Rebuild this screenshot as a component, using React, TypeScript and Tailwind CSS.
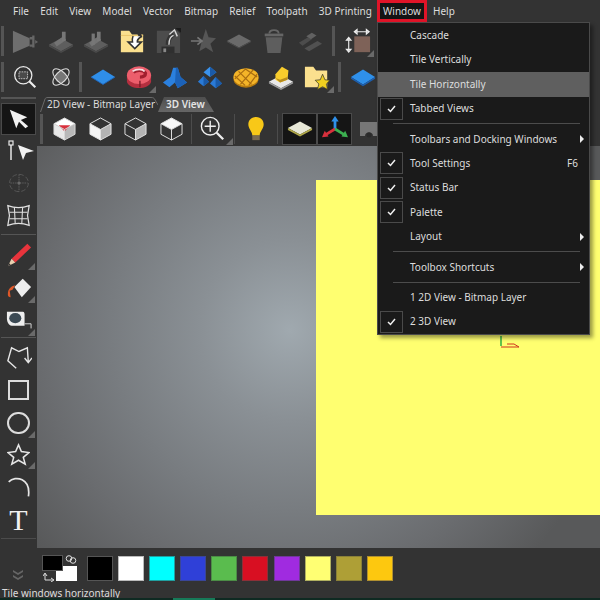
import React from 'react'

const Corner = () => (
  <svg className="absolute right-[1px] bottom-[1px]" width="7" height="7" viewBox="0 0 7 7"><path d="M7 0V7H0Z" fill="#6a6a6a" /></svg>
)

function Btn({ children, more, w = 'w-[35.6px]', h = 'h-[34px]' }: { children: React.ReactNode; more?: boolean; w?: string; h?: string }) {
  return (
    <div className={`relative flex shrink-0 items-center justify-center ${h} ${w}`}>
      {children}
      {more && <Corner />}
    </div>
  )
}

const VSep = ({ cls = 'h-[30px]' }: { cls?: string }) => <div className={`w-[3px] shrink-0 bg-[#555555] ${cls}`} />

function Ico({ children, s = 26 }: { children: React.ReactNode; s?: number }) {
  return <svg width={s} height={s} viewBox="0 0 28 28" fill="none">{children}</svg>
}

const Extrude = () => (
  <Ico><path d="M1 3L19 11V19L1 27Z" fill="#6e6e6e" /><path d="M19 11H23M19 19H23M23 8V21" stroke="#666" strokeWidth="2.500" /><path d="M25 13l3 2-3 2Z" fill="#666" /></Ico>
)
const Plate = ({ two }: { two?: boolean }) => (
  <Ico>
    <path d="M1 18L14 11L27 18L14 25Z" fill="#5e5e5e" /><path d="M1 18V20L14 27L27 20V18L14 25Z" fill="#4a4a4a" />
    <path d="M8 18L18 11" stroke="#747474" strokeWidth="5" /><path d="M17 4V14" stroke="#777" strokeWidth="4" />
    {two && <path d="M11 6V18" stroke="#777" strokeWidth="3.500" />}
  </Ico>
)
const FolderArrow = () => (
  <Ico>
    <path d="M2 3H11L14 7H26V26H2Z" fill="#fbe08e" /><path d="M2 8H26" stroke="#e8c468" strokeWidth="1" />
    <path d="M16 9C15 11 15 13 15.500 16H12L17 21L22 16H19C18.500 13 19.500 11 23 9L21 5" stroke="#333" strokeWidth="3.500" />
    <path d="M16 9C15 11 15 13 15.500 16H12L17 21L22 16H19C18.500 13 19.500 11 23 9" fill="#fff" />
  </Ico>
)
const SaveUp = () => (
  <Ico>
    <path d="M2 3H24L27 6V27H2Z" fill="#4c4c4c" /><path d="M7 20H21V27H7Z" fill="#2f2f2f" /><path d="M9 22H12V26H9Z" fill="#888" />
    <path d="M14 18C14 12 16 9 20 7" stroke="#333" strokeWidth="5" /><path d="M15 18C15 12 17 9 20 8M15.500 7L21 2L24 9" stroke="#d8d8d8" strokeWidth="1.500" />
    <path d="M22 0H28V5Z" fill="#1c1c1c" />
  </Ico>
)
const StarIn = () => (
  <Ico><path d="M17 1L20 10L28 11L22 17L25 26L17 21L10 25L12 17" fill="#565656" /><path d="M1 14H12M8 10L13 14L8 18" stroke="#777" strokeWidth="1.800" /></Ico>
)
const Diamond = () => (
  <Ico><path d="M1 14L14 7L27 14L14 21Z" fill="#6a6a6a" /><path d="M1 14V15L14 22L27 15V14L14 21Z" fill="#4e4e4e" /></Ico>
)
const Bucket = () => (
  <Ico><path d="M9 6C9 1 19 1 19 6" stroke="#666" strokeWidth="2" /><path d="M4 6H24V9H4Z" fill="#666" /><path d="M5 10H23L21 27H7Z" fill="#5e5e5e" /></Ico>
)
const Steps = () => (
  <Ico><path d="M2 16L12 10L16 12L6 19Z" fill="#4c4c4c" /><path d="M10 9L16 5L21 8L15 12Z" fill="#616161" /><path d="M8 22L22 14L27 17L13 25Z" fill="#515151" /></Ico>
)
const Resize = () => (
  <Ico>
    <path d="M10 9H27V26H10Z" fill="#7e6258" /><path d="M10 4H26M10 4l3-2.500v5ZM26 4l-3-2.500v5Z" stroke="#eee" strokeWidth="1.200" />
    <path d="M4 10V26M4 10l-2.500 3h5ZM4 26l-2.500-3h5Z" stroke="#eee" strokeWidth="1.200" />
  </Ico>
)
const ZoomBox = () => (
  <Ico s={24}><circle cx="12" cy="12" r="10" stroke="#e8e8e8" strokeWidth="1.500" /><path d="M7 8H17V16H7Z" stroke="#cfcfcf" strokeDasharray="2 1" fill="#4a4a4a" /><path d="M19 19L26 26" stroke="#eee" strokeWidth="2.500" /></Ico>
)
const Atom = () => (
  <Ico s={24}><circle cx="14" cy="14" r="7" fill="#767676" /><ellipse cx="14" cy="14" rx="6" ry="12" stroke="#ddd" strokeWidth="1.200" transform="rotate(45 14 14)" /><ellipse cx="14" cy="14" rx="6" ry="12" stroke="#ddd" strokeWidth="1.200" transform="rotate(-45 14 14)" /></Ico>
)
const BlueDiamond = () => (
  <Ico><path d="M1 14L14 6L27 14L14 22Z" fill="#2f8ee8" /><path d="M1 14L14 22L27 14" stroke="#1f64b8" strokeWidth="1" /></Ico>
)
const RedRing = () => (
  <Ico>
    <path d="M1 13V19C3 28 25 28 27 19V13Z" fill="#b42f3f" /><ellipse cx="14" cy="12" rx="13" ry="9.500" fill="#ec5e6c" />
    <path d="M8 9C11 6 19 6 21 10C21 13 18 14 15 14" stroke="#a01f2e" strokeWidth="3.500" /><path d="M7 8C11 5 18 5 20 8" stroke="#f6dce0" strokeWidth="1.800" />
    <path d="M15 18V25" stroke="#7c1c28" strokeWidth="1.500" />
  </Ico>
)
const Peak = () => (
  <Ico><path d="M1 20L9 14L12 4H17L20 14L27 20L17 26L14 20L8 25Z" fill="#2b80de" /><path d="M15 4H17L20 14L27 20L17 26L14 20Z" fill="#1c62b8" /></Ico>
)
const Peaks = () => (
  <Ico>
    <path d="M7 9L14 3L21 9L14 14Z" fill="#3a92ec" /><path d="M1 19L7 13L13 19L7 24Z" fill="#2a7ad6" /><path d="M14 21L20 14L27 21L20 26Z" fill="#2a7ad6" />
    <path d="M14 3V14L21 9ZM7 13V24L13 19ZM20 14V26L27 21Z" fill="#1a5aa8" />
  </Ico>
)
const Waffle = () => (
  <Ico>
    <ellipse cx="14" cy="16" rx="13.500" ry="9.500" fill="#b87c10" /><ellipse cx="14" cy="14" rx="13.500" ry="9.500" fill="#f4b428" />
    <path d="M6 8L20 22M13 5L26 14M2 13L13 23M22 6L8 22M14 5L2 16M26 11L17 23" stroke="#a86c10" strokeWidth="1.300" />
  </Ico>
)
const Gem = () => (
  <Ico><path d="M1 19L14 12L27 19L14 26Z" fill="#e8e8e8" /><path d="M1 19V21L14 28L27 21V19L14 26Z" fill="#9a9a9a" /><path d="M8 11L15 3L22 7L21 17L13 20L8 17Z" fill="#f8cc2c" /><path d="M8 15L13 20L21 17V14L13 17Z" fill="#b88c1c" /></Ico>
)
const FolderStar = () => (
  <Ico><path d="M1 3H10L13 7H25V25H1Z" fill="#fbe08e" /><path d="M20 11L22.500 17L28 17.500L24 21.500L25.500 27.500L20 24.500L14.500 27.500L16 21.500L12 17.500L17.500 17Z" fill="#f0d020" stroke="#3a3a2a" strokeWidth="0.800" /></Ico>
)
const BlueSlab = () => (
  <Ico><path d="M1 14L14 6L27 14L14 22Z" fill="#2f90ea" /><path d="M1 14V16L14 24L27 16V14L14 22Z" fill="#1c5fb0" /></Ico>
)

// hex cube, faces given top / left / right
function Cube({ top, left, right, red }: { top: string; left: string; right: string; red?: boolean }) {
  return (
    <svg width="23" height="24" viewBox="0 0 24 25" fill="none">
      <path d="M12 1L23 7L12 13L1 7Z" fill={top} />
      <path d="M1 7L12 13V24L1 18Z" fill={left} />
      <path d="M23 7L12 13V24L23 18Z" fill={right} />
      {red && <path d="M6 8.500H18L12 15Z" fill="#d8303c" />}
      <path d="M12 1L23 7V18L12 24L1 18V7ZM1 7L12 13L23 7M12 13V24" stroke={red ? '#d8d8d8' : '#e4e4e4'} strokeWidth="1" />
    </svg>
  )
}
const ZoomPlus = () => (
  <Ico><circle cx="11" cy="11" r="9.500" stroke="#eee" strokeWidth="1.500" /><path d="M11 5V17M5 11H17" stroke="#eee" strokeWidth="1.500" /><path d="M18 18L25 25" stroke="#eee" strokeWidth="2.500" /></Ico>
)
const Bulb = () => (
  <Ico><path d="M14 1C7 1 5 7 6 11C7 15 10 17 10 21H18C18 17 21 15 22 11C23 7 21 1 14 1Z" fill="#f8c818" /><path d="M10 21H18V26H10Z" fill="#7a6a50" /></Ico>
)
const PlateYellow = () => (
  <Ico><path d="M1 13L14 6L27 13L14 20Z" fill="#e8e8d8" /><path d="M1 13V15L14 22L27 15V13L14 20Z" fill="#b0a848" /></Ico>
)
const Axes = () => (
  <Ico><path d="M14 14V4" stroke="#2f90ea" strokeWidth="3" /><path d="M14 0L18 6H10Z" fill="#2f90ea" /><path d="M14 14L4 20" stroke="#d8303c" strokeWidth="3" /><path d="M0 23L3 16L7 22Z" fill="#d8303c" /><path d="M14 14L24 20" stroke="#3cb050" strokeWidth="3" /><path d="M28 23L25 16L21 22Z" fill="#3cb050" /></Ico>
)
const Arrow = () => (
  <svg width="22" height="22" viewBox="0 0 24 24"><path d="M2 2L21 10L14 13L22 20L19 22L12 15L9 22Z" fill="#f2f2f2" /></svg>
)
const NodeArrow = () => (
  <svg width="30" height="24" viewBox="0 0 30 24" fill="none">
    <path d="M7 6V21" stroke="#e8e8e8" strokeWidth="1.500" /><rect x="5" y="2" width="4" height="4" stroke="#e8e8e8" strokeWidth="1.200" />
    <path d="M14 6L30 12L22 14L19 21Z" fill="#f2f2f2" />
  </svg>
)
const Move3d = () => (
  <Ico s={22}>
    <ellipse cx="14" cy="14" rx="12" ry="11" stroke="#5e5e5e" strokeWidth="1" strokeDasharray="6 3" /><path d="M14 3V25M3 14H25" stroke="#666" strokeWidth="1" strokeDasharray="2 1" /><circle cx="14" cy="14" r="2" fill="#6a6a6a" />
  </Ico>
)
const Warp = () => (
  <Ico s={23}>
    <path d="M1 2C9 5 19 5 27 2L25 14L27 26C19 23 9 23 1 26L3 14Z" fill="#383838" stroke="#e0e0e0" strokeWidth="1.500" />
    <path d="M9 4L10 24M19 4L18 24M3 10H25M3 18H25" stroke="#e0e0e0" strokeWidth="1.300" />
  </Ico>
)
const Pencil = () => (
  <Ico><path d="M6 18L23 2L27 6L10 22Z" fill="#e8343c" /><path d="M6 18L10 22L2 26Z" fill="#e8d0b0" /><path d="M2 26L3.500 23L5 24.500Z" fill="#333" /></Ico>
)
const Eraser = () => (
  <Ico><path d="M9 13L18 4L27 13L17 24Z" fill="#eeeeee" /><path d="M2 21C2 15 5 12 10 11L7 16L4 17L5 24C3 24 2 23 2 21Z" fill="#e05828" /></Ico>
)
const Tape = () => (
  <Ico><path d="M1 4H18C20 4 20 6 20 8V19H6C3 19 1 15 1 11Z" fill="#eeeeee" /><ellipse cx="10" cy="11" rx="6.500" ry="5.500" fill="#3c4a54" /><path d="M20 17H27V22" stroke="#ddd" strokeWidth="1" /></Ico>
)
const Poly = () => (
  <Ico><path d="M11 25L2 17L6 3L14 7L23 3L24 18M20 14L24 19L28 14" stroke="#e6e6e6" strokeWidth="1.500" /></Ico>
)
const Arc = () => (
  <Ico s={24}><path d="M2 8C10 0 28 4 25 25" stroke="#e6e6e6" strokeWidth="2" /></Ico>
)
const Check = () => (
  <svg width="9" height="8" viewBox="0 0 9 8" fill="none"><path d="M1 4L3.500 6.500L8 1" stroke="#f0f0f0" strokeWidth="1.500" /></svg>
)

function MenuItem({ label, checked, active, sub, shortcut }: { label: string; checked?: boolean; active?: boolean; sub?: boolean; shortcut?: string }) {
  return (
    <div className={`relative flex h-[24.400px] items-center pl-[32px] ${sub ? 'pr-[5px]' : 'pr-[11px]'} ${active ? 'bg-[#5f5f5f]' : ''}`}>
      {checked && (
        <div className="absolute left-[2px] top-[1px] flex h-[22px] w-[23px] items-center justify-center border border-[#4a4a4a]"><Check /></div>
      )}
      <span className="flex-1">{label}</span>
      {shortcut && <span>{shortcut}</span>}
      {sub && <div className="h-0 w-0 border-y-[4px] border-l-[4px] border-y-transparent border-l-[#eeeeee]" />}
    </div>
  )
}

const MenuSep = () => (
  <div className="flex h-[6px] items-center pl-[15px] pr-[9px]"><div className="h-[1px] w-full bg-[#4c4c4c]" /></div>
)

const swatches = [
  'bg-[#000000] border-[#555555]', 'bg-[#ffffff] border-[#bbbbbb]', 'bg-[#00ffff] border-[#20a0a0]', 'bg-[#2f40d8] border-[#3a4698]', 'bg-[#5abc4e] border-[#4c8c46]',
  'bg-[#d80f22] border-[#8c3038]', 'bg-[#a02be0] border-[#70389a]', 'bg-[#ffff73] border-[#b0b060]', 'bg-[#ae9f36] border-[#8a8038]', 'bg-[#fdc80f] border-[#b09030]',
]

const menus = ['File', 'Edit', 'View', 'Model', 'Vector', 'Bitmap', 'Relief', 'Toolpath', '3D Printing']

export default function App() {
  return (
    <div className="relative flex h-[600px] w-[600px] flex-col overflow-hidden bg-[#333333] font-['Noto_Sans',sans-serif] text-[10px] text-[#dddddd]">
      {/* menu bar */}
      <div className="flex h-[22px] shrink-0 items-center pl-[13px]">
        <div className="flex w-[364px] gap-[11.200px] whitespace-nowrap">
          {menus.map(m => <span key={m}>{m}</span>)}
        </div>
        <div className="flex h-[22px] w-[50px] items-center justify-center border-[3px] border-[#e01428] bg-[#141414]">Window</div>
        <span className="ml-[6px]">Help</span>
      </div>

      {/* toolbars */}
      <div className="flex h-[37px] shrink-0 items-center pl-[1px]">
        <VSep />
        <div className="w-[3.500px]" />
        <Btn><Extrude /></Btn><Btn><Plate /></Btn><Btn><Plate two /></Btn><Btn><FolderArrow /></Btn><Btn><SaveUp /></Btn>
        <Btn><StarIn /></Btn><Btn><Diamond /></Btn><Btn><Bucket /></Btn><Btn><Steps /></Btn>
        <div className="w-[4px]" />
        <VSep />
        <div className="w-[5px]" />
        <Btn more><Resize /></Btn>
      </div>
      <div className="flex h-[36px] shrink-0 items-center pl-[1px]">
        <VSep />
        <div className="w-[3.500px]" />
        <Btn><ZoomBox /></Btn><Btn><Atom /></Btn>
        <VSep />
        <div className="w-[4px]" />
        <Btn><BlueDiamond /></Btn><Btn more><RedRing /></Btn><Btn><Peak /></Btn><Btn><Peaks /></Btn><Btn><Waffle /></Btn><Btn><Gem /></Btn><Btn more><FolderStar /></Btn>
        <div className="w-[3px]" />
        <VSep />
        <div className="w-[4px]" />
        <Btn><BlueSlab /></Btn>
      </div>

      <div className="flex min-h-0 flex-1">
        {/* toolbox */}
        <div className="flex w-[37px] shrink-0 flex-col items-center">
          <div className="mt-[2px] h-[2px] w-[35px] bg-[#555555]" />
          <div className="mt-[4px] flex h-[32px] w-[35px] items-center justify-center border border-[#4a4a4a] bg-[#151515]"><Arrow /></div>
          <div className="flex h-[31px] items-center"><NodeArrow /></div>
          <div className="flex h-[33px] items-center"><Move3d /></div>
          <div className="flex h-[32px] items-center"><Warp /></div>
          <div className="my-[3px] h-[1px] w-[35px] bg-[#555555]" />
          <Btn w="w-[35px]" h="h-[33px]" more><Pencil /></Btn>
          <Btn w="w-[35px]" h="h-[33px]" more><Eraser /></Btn>
          <Btn w="w-[35px]" h="h-[33px]" more><Tape /></Btn>
          <div className="mb-[4px] h-[1px] w-[35px] bg-[#555555]" />
          <div className="flex h-[32px] items-center"><Poly /></div>
          <div className="flex h-[32px] items-center"><div className="h-[20px] w-[21px] border-2 border-[#dddddd]" /></div>
          <Btn w="w-[35px]" h="h-[33px]" more><div className="h-[22px] w-[23px] rounded-full border-2 border-[#dddddd]" /></Btn>
          <Btn w="w-[35px]" h="h-[31px]" more><svg width="23" height="23" viewBox="0 0 24 24"><path d="M12 2L15 9L23 10L17 15L19 22L12 18L5 22L7 15L1 10L9 9Z" fill="none" stroke="#e6e6e6" strokeWidth="1.600" /></svg></Btn>
          <div className="flex h-[33px] items-center"><Arc /></div>
          <div className="flex h-[34px] items-center font-['Liberation_Serif',serif] text-[30px] leading-none text-[#f2f2f2]">T</div>
          <div className="mt-[1px] h-[1px] w-[35px] bg-[#4c4c4c]" />
        </div>

        <div className="flex min-w-0 flex-1 flex-col">
          {/* tabs */}
          <div className="flex h-[17px] shrink-0 items-end whitespace-nowrap pl-[3px]">
            <div className="relative flex h-[15px] w-[118px] items-center pl-[7px]">
              <svg className="absolute left-0 top-0" width="118" height="15" viewBox="0 0 118 15" fill="none"><path d="M0.500 15L5 2C5.500 1 6 0.500 8 0.500H111C113 0.500 114 1 114.500 2L118 8" stroke="#6a6a6a" /></svg>
              <span className="relative">2D View - Bitmap Layer</span>
            </div>
            <div className="flex h-[15px] w-[56px] items-center bg-[linear-gradient(#4e4e4e,#666666)] pl-[8px] font-semibold text-[#e4e4e4] [clip-path:polygon(0_100%,6px_0,47px_0,100%_100%)]">3D View</div>
          </div>
          {/* view toolbar */}
          <div className="flex h-[34px] shrink-0 items-center pl-[3px]">
            <VSep />
            <div className="w-[4px]" />
            <Btn><Cube top="#ffffff" left="#e8e8e8" right="#b8b8b8" red /></Btn>
            <Btn><Cube top="#333333" left="#f4f4f4" right="#b4b4b4" /></Btn>
            <Btn><Cube top="#333333" left="#333333" right="#b4b4b4" /></Btn>
            <Btn><Cube top="#f8f8f8" left="#333333" right="#333333" /></Btn>
            <div className="ml-[2px] h-[30px] w-[1px] bg-[#4c4c4c]" />
            <Btn w="w-[42px]" more><ZoomPlus /></Btn>
            <div className="h-[30px] w-[1px] bg-[#4c4c4c]" />
            <Btn w="w-[42px]"><Bulb /></Btn>
            <div className="h-[30px] w-[1px] bg-[#4c4c4c]" />
            <div className="ml-[4px] flex h-[32px] w-[35px] items-center justify-center border border-[#4a4a4a] bg-[#151515]"><PlateYellow /></div>
            <div className="flex h-[32px] w-[35px] items-center justify-center border border-[#4a4a4a] bg-[#151515]"><Axes /></div>
            <svg className="ml-[8px]" width="18" height="18" viewBox="0 0 18 18"><path d="M0 2H18V16H13C13 11 5 11 5 16H0Z" fill="#777777" /><circle cx="9" cy="15" r="2.500" fill="#2a2a2a" /></svg>
          </div>
          {/* 3d view */}
          <div className="flex min-h-0 flex-1 bg-[radial-gradient(circle_at_253px_184px,#a0a9af_0px,#8a9095_90px,#787c80_180px,#6a6c6f_250px,#58595a_330px)] pl-[279px] pt-[34px] pb-[33px]">
            <div className="relative flex-1 bg-[#ffff70]">
              <svg className="absolute left-[184px] top-[156px]" width="20" height="12" viewBox="0 0 20 12" fill="none"><path d="M1 0V10" stroke="#2fb040" strokeWidth="1.500" /><path d="M1 11H19L14 8H7" stroke="#d0341c" /></svg>
            </div>
          </div>
        </div>
      </div>

      {/* palette */}
      <div className="flex h-[37px] shrink-0 items-center pl-[13px] pt-[4px]">
        <svg width="10" height="10" viewBox="0 0 10 10" className="mt-[12px]"><path d="M0 0L5 3L10 0V2L5 5L0 2ZM0 5L5 8L10 5V7L5 10L0 7Z" fill="#666666" /></svg>
        <div className="relative ml-[19px] h-[28px] w-[45px]">
          <div className="absolute left-[14px] top-[11px] h-[15px] w-[21px] bg-[#ffffff]" />
          <div className="absolute left-0 top-0 h-[16px] w-[21px] border border-[#555555] bg-[#000000]" />
          <svg className="absolute left-[23px] top-0" width="12" height="9" viewBox="0 0 12 9" fill="none"><circle cx="4" cy="3.500" r="2.800" stroke="#ddd" /><circle cx="8" cy="5.500" r="2.800" stroke="#ddd" /></svg>
          <svg className="absolute left-[1px] top-[18px]" width="11" height="9" viewBox="0 0 11 9" fill="none"><path d="M2 1V7H10M0 3L2 0L4 3M8 5L11 7L8 9" stroke="#ddd" /></svg>
        </div>
        <div className="flex gap-[5.100px]">
          {swatches.map(c => <div key={c} className={`h-[25px] w-[26px] border ${c}`} />)}
        </div>
      </div>

      {/* status bar */}
      <div className="flex h-[13px] shrink-0 items-center pl-[2px] pt-[3px]">Tile windows horizontally</div>
      <div className="flex h-[2px] shrink-0 bg-[#0f2a22]"><div className="ml-[173px] w-[42px] bg-[#167a58]" /></div>

      {/* window menu */}
      <div className="absolute left-[377px] top-[22px] w-[213px] border border-[#4a4a4a] bg-[#1a1a1a] pt-[0.400px] shadow-[3px_3px_4px_rgba(0,0,0,0.4)]">
        <MenuItem label="Cascade" />
        <MenuItem label="Tile Vertically" />
        <MenuItem label="Tile Horizontally" active />
        <MenuItem label="Tabbed Views" checked />
        <MenuSep />
        <MenuItem label="Toolbars and Docking Windows" sub />
        <MenuItem label="Tool Settings" checked shortcut="F6" />
        <MenuItem label="Status Bar" checked />
        <MenuItem label="Palette" checked />
        <MenuItem label="Layout" sub />
        <MenuSep />
        <MenuItem label="Toolbox Shortcuts" sub />
        <MenuSep />
        <MenuItem label="1 2D View - Bitmap Layer" />
        <MenuItem label="2 3D View" checked />
      </div>
    </div>
  )
}
